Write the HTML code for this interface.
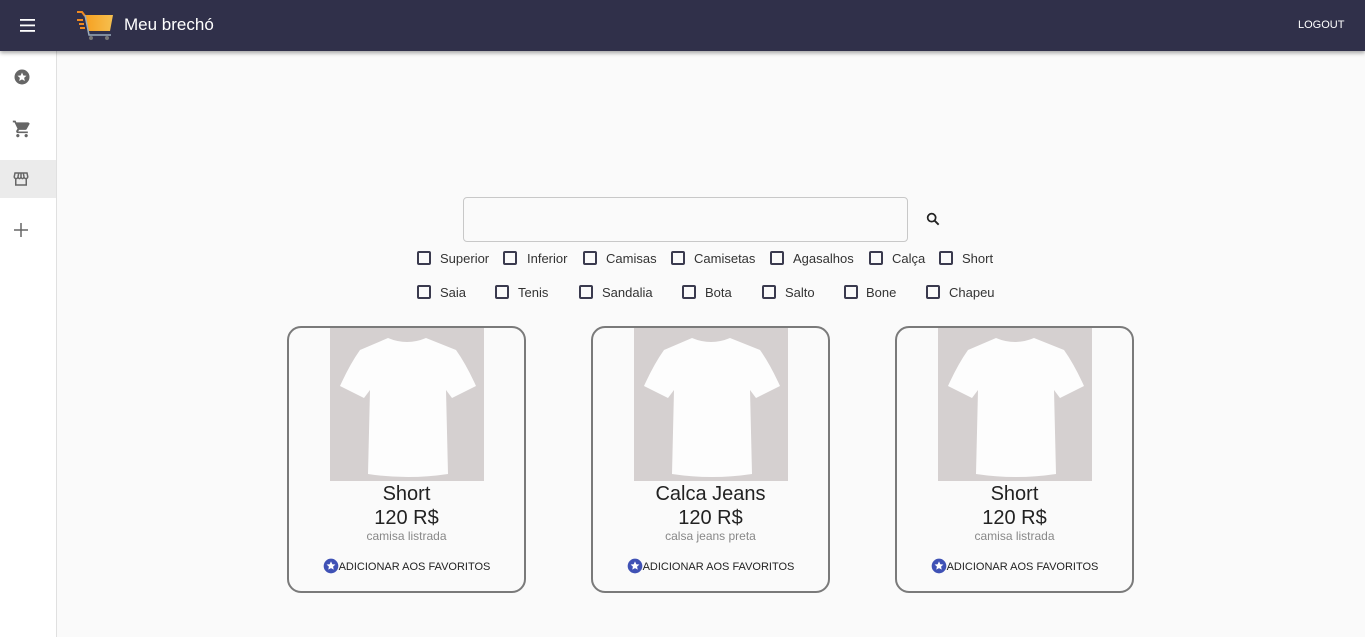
<!DOCTYPE html>
<html><head><meta charset="utf-8"><style>
*{box-sizing:border-box;margin:0;padding:0}
body{width:1365px;height:637px;background:#fafafa;font-family:"Liberation Sans",Roboto,sans-serif;position:relative;overflow:hidden;color:#333}
.top{position:absolute;left:0;top:0;width:1365px;height:51px;background:#30304a;box-shadow:0 2px 4px rgba(0,0,0,.35);z-index:2}
.side{position:absolute;left:0;top:51px;width:57px;height:586px;background:#fff;border-right:1px solid #e0e0e0}
.abs{position:absolute}
.cb{position:absolute;width:14px;height:14px;border:2px solid #3a3a4e;border-radius:2px}
.lb{position:absolute;font-size:13px;color:#333}
.card{position:absolute;top:326px;width:239px;height:267px;border:2px solid #7a7a7a;border-radius:14px}
.img{position:absolute;left:41px;top:0px;width:154px;height:153px;background:#d5d0d0}
.t{position:absolute;left:0;width:100%;text-align:center}
</style></head><body>
<div class="top">
 <svg class="abs" style="left:20px;top:19px" width="16" height="13"><rect y="0" width="15" height="1.8" fill="#fff"/><rect y="5.5" width="15" height="1.8" fill="#fff"/><rect y="11" width="15" height="1.8" fill="#fff"/></svg>
 <svg class="abs" style="left:75px;top:9px" width="40" height="34" viewBox="0 0 40 34">
  <defs><linearGradient id="g" x1="0" x2="1"><stop offset="0" stop-color="#f7a020"/><stop offset="1" stop-color="#f5c050"/></linearGradient></defs>
  <path d="M2 3h5l3 4" stroke="#f08a20" stroke-width="2" fill="none"/>
  <path d="M10 6h28l-3 16H13z" fill="url(#g)"/>
  <path d="M2 11h6M4 15h5M5 19h5" stroke="#f08a20" stroke-width="2"/>
  <path d="M10 6l4 20h22" stroke="#9ab" stroke-width="1.5" fill="none"/>
  <circle cx="16" cy="29" r="2" fill="#777"/><circle cx="32" cy="29" r="2" fill="#777"/>
 </svg>
 <div class="abs" style="left:124px;top:15px;font-size:17px;color:#fff">Meu brechó</div>
 <div class="abs" style="left:1298px;top:19px;font-size:11px;color:#fff">LOGOUT</div>
</div>
<div class="side">
 <svg class="abs" style="left:13px;top:17px" width="18" height="18" viewBox="0 0 24 24"><circle cx="12" cy="12" r="10" fill="#666"/><path d="M12 6l1.8 4 4.2.4-3.2 2.8 1 4.2L12 15.2 8.2 17.4l1-4.2L6 10.4l4.2-.4z" fill="#fff"/></svg>
 <svg class="abs" style="left:12px;top:68px" width="20" height="20" viewBox="0 0 24 24"><path fill="#666" d="M7 18c-1.1 0-2 .9-2 2s.9 2 2 2 2-.9 2-2-.9-2-2-2zM1 2v2h2l3.6 7.6-1.4 2.4C5.1 14.3 5 14.6 5 15c0 1.1.9 2 2 2h12v-2H7.4l1.1-2h7.5c.8 0 1.4-.4 1.7-1l3.6-6.5L19.6 4H5.2l-.9-2H1zm16 16c-1.1 0-2 .9-2 2s.9 2 2 2 2-.9 2-2-.9-2-2-2z"/></svg>
 <div class="abs" style="left:0;top:109px;width:56px;height:38px;background:#ebebeb"></div>
 <svg class="abs" style="left:12px;top:119px" width="18" height="18" viewBox="0 0 24 24"><path fill="none" stroke="#666" stroke-width="2" d="M4 4h16l1 5c0 1.5-1.2 2.5-2.5 2.5S16 10.5 16 9c0 1.5-1.5 2.5-2 2.5S12 10.5 12 9c0 1.5-1.5 2.5-2 2.5S8 10.5 8 9c0 1.5-1.2 2.5-2.5 2.5S3 10.5 3 9zM5 11.5V20h14v-8.5M9 4l-1 5M15 4l1 5M12 4v5"/></svg>
 <svg class="abs" style="left:14px;top:172px" width="14" height="14"><path d="M7 0v14M0 7h14" stroke="#666" stroke-width="1.5"/></svg>
</div>
<div class="abs" style="left:463px;top:197px;width:445px;height:45px;border:1px solid #c8c8c8;border-radius:4px;background:#fafafa"></div>
<svg class="abs" style="left:925px;top:211px" width="16" height="16" viewBox="0 0 24 24"><circle cx="10" cy="10" r="6" fill="none" stroke="#222" stroke-width="2.6"/><path d="M14.5 14.5l6 6" stroke="#222" stroke-width="2.8"/></svg>
<div class="cb" style="left:417px;top:251px"></div><div class="lb" style="left:440px;top:251px">Superior</div>
<div class="cb" style="left:503px;top:251px"></div><div class="lb" style="left:527px;top:251px">Inferior</div>
<div class="cb" style="left:583px;top:251px"></div><div class="lb" style="left:606px;top:251px">Camisas</div>
<div class="cb" style="left:671px;top:251px"></div><div class="lb" style="left:694px;top:251px">Camisetas</div>
<div class="cb" style="left:770px;top:251px"></div><div class="lb" style="left:793px;top:251px">Agasalhos</div>
<div class="cb" style="left:869px;top:251px"></div><div class="lb" style="left:892px;top:251px">Calça</div>
<div class="cb" style="left:939px;top:251px"></div><div class="lb" style="left:962px;top:251px">Short</div>
<div class="cb" style="left:417px;top:285px"></div><div class="lb" style="left:440px;top:285px">Saia</div>
<div class="cb" style="left:495px;top:285px"></div><div class="lb" style="left:518px;top:285px">Tenis</div>
<div class="cb" style="left:579px;top:285px"></div><div class="lb" style="left:602px;top:285px">Sandalia</div>
<div class="cb" style="left:682px;top:285px"></div><div class="lb" style="left:705px;top:285px">Bota</div>
<div class="cb" style="left:762px;top:285px"></div><div class="lb" style="left:785px;top:285px">Salto</div>
<div class="cb" style="left:844px;top:285px"></div><div class="lb" style="left:866px;top:285px">Bone</div>
<div class="cb" style="left:926px;top:285px"></div><div class="lb" style="left:949px;top:285px">Chapeu</div>

<div class="card" style="left:287px">
 <div class="img"><svg width="154" height="153" viewBox="0 0 154 153"><path d="M58 10q19 8 38 0l30 12q10 14 20 36l-24 12-6-8 2 84q-40 6-80 0l2-84-6 8L10 58q10-22 20-36z" fill="#fdfdfd"/></svg></div>
 <div class="t" style="top:155px;font-size:20px;color:#222">Short</div>
 <div class="t" style="top:179px;font-size:20px;color:#222">120 R$</div>
 <div class="t" style="top:201px;font-size:12px;color:#888">camisa listrada</div>
 <div class="t" style="top:230px;font-size:11px;color:#222"><svg width="16" height="16" viewBox="0 0 24 24" style="vertical-align:-4px"><circle cx="12" cy="12" r="11" fill="#3f51b5"/><path d="M12 5l2 4.3 4.6.5-3.5 3.1 1 4.6L12 15.1 7.9 17.5l1-4.6-3.5-3.1 4.6-.5z" fill="#fff"/></svg>ADICIONAR AOS FAVORITOS</div>
</div>
<div class="card" style="left:591px">
 <div class="img"><svg width="154" height="153" viewBox="0 0 154 153"><path d="M58 10q19 8 38 0l30 12q10 14 20 36l-24 12-6-8 2 84q-40 6-80 0l2-84-6 8L10 58q10-22 20-36z" fill="#fdfdfd"/></svg></div>
 <div class="t" style="top:155px;font-size:20px;color:#222">Calca Jeans</div>
 <div class="t" style="top:179px;font-size:20px;color:#222">120 R$</div>
 <div class="t" style="top:201px;font-size:12px;color:#888">calsa jeans preta</div>
 <div class="t" style="top:230px;font-size:11px;color:#222"><svg width="16" height="16" viewBox="0 0 24 24" style="vertical-align:-4px"><circle cx="12" cy="12" r="11" fill="#3f51b5"/><path d="M12 5l2 4.3 4.6.5-3.5 3.1 1 4.6L12 15.1 7.9 17.5l1-4.6-3.5-3.1 4.6-.5z" fill="#fff"/></svg>ADICIONAR AOS FAVORITOS</div>
</div>
<div class="card" style="left:895px">
 <div class="img"><svg width="154" height="153" viewBox="0 0 154 153"><path d="M58 10q19 8 38 0l30 12q10 14 20 36l-24 12-6-8 2 84q-40 6-80 0l2-84-6 8L10 58q10-22 20-36z" fill="#fdfdfd"/></svg></div>
 <div class="t" style="top:155px;font-size:20px;color:#222">Short</div>
 <div class="t" style="top:179px;font-size:20px;color:#222">120 R$</div>
 <div class="t" style="top:201px;font-size:12px;color:#888">camisa listrada</div>
 <div class="t" style="top:230px;font-size:11px;color:#222"><svg width="16" height="16" viewBox="0 0 24 24" style="vertical-align:-4px"><circle cx="12" cy="12" r="11" fill="#3f51b5"/><path d="M12 5l2 4.3 4.6.5-3.5 3.1 1 4.6L12 15.1 7.9 17.5l1-4.6-3.5-3.1 4.6-.5z" fill="#fff"/></svg>ADICIONAR AOS FAVORITOS</div>
</div>
</body></html>
